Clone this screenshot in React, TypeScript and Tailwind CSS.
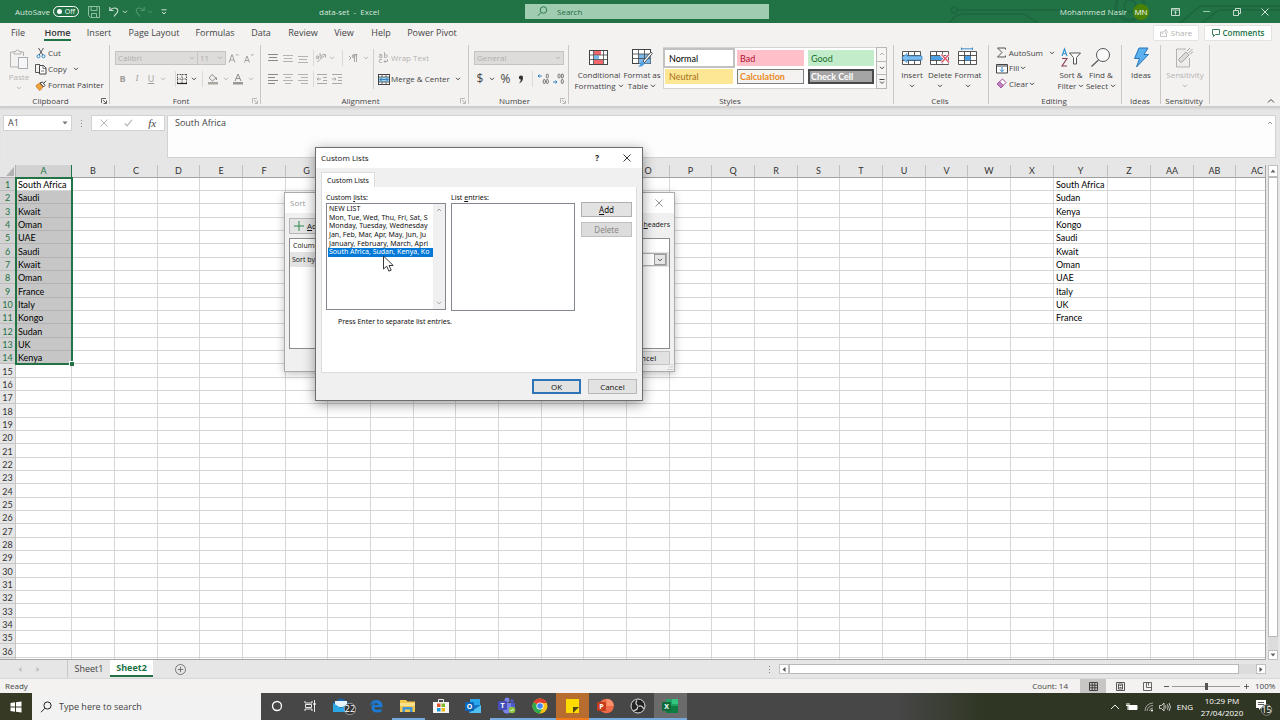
import type { ReactNode } from "react";

const INK = "#444444";
const DIM = "#b4b2b0";

function Svg({ w, h, children, className = "" }: { w: number; h: number; children: ReactNode; className?: string }) {
  return (
    <svg width={w} height={h} viewBox={`0 0 ${w} ${h}`} fill="none" className={`shrink-0 ${className}`} aria-hidden="true">
      {children}
    </svg>
  );
}

function Chevron({ color = INK }: { color?: string }) {
  return (
    <Svg w={6} h={4}>
      <path d="M1 .8 3 2.8 5 .8" stroke={color} strokeWidth="1" />
    </Svg>
  );
}

function Slot({ className, children, label }: { className: string; children: ReactNode; label: string }) {
  return (
    <button aria-label={label} className={`flex h-4 shrink-0 items-center justify-center ${className}`}>
      {children}
    </button>
  );
}

function Divider() {
  return <span className="h-4 w-px shrink-0 bg-[#dcdad8]" />;
}

function Launcher({ dim = false }: { dim?: boolean }) {
  const c = dim ? "#b4b2b0" : "#555555";
  return (
    <Svg w={6} h={6}>
      <path d="M.5 5V.5H5M2 2l3 3M5.5 2.5v3h-3" stroke={c} strokeWidth=".9" />
    </Svg>
  );
}

function Group({ title, width, launcher, children }: { title: string; width: string; launcher?: "on" | "dim"; children: ReactNode }) {
  return (
    <section aria-label={title} className={`flex h-[59px] shrink-0 flex-col border-r border-[#c9c7c5] ${width}`}>
      <div className="flex h-[51px] shrink-0 items-start">{children}</div>
      <div className="flex h-[10px] shrink-0 items-center pr-[2px] text-[8px] leading-[10px] text-[#444]">
        <span className="flex-1 text-center">{title}</span>
        {launcher && <Launcher dim={launcher === "dim"} />}
      </div>
    </section>
  );
}

function BigButton({ width, icon, lines, chevron, dim }: { width: string; icon: ReactNode; lines: string[]; chevron?: boolean; dim?: boolean }) {
  const last = lines.length - 1;
  return (
    <button className={`flex shrink-0 flex-col items-center whitespace-nowrap text-[8px] leading-[11px] ${width} ${dim ? "text-[#b4b2b0]" : "text-[#444]"}`}>
      <span className="flex h-[24px] items-center justify-center">{icon}</span>
      {lines.map((l, i) => (
        <span key={l} className="flex items-center gap-[2px]">
          {l}
          {chevron && lines.length > 1 && i === last && <Chevron />}
        </span>
      ))}
      {chevron && lines.length === 1 && (
        <span className="flex h-[11px] items-center">
          <Chevron color={dim ? DIM : INK} />
        </span>
      )}
    </button>
  );
}

/* ---------- ribbon icons ---------- */

const PasteIcon = () => (
  <Svg w={20} h={21}>
    <path d="M5 3H1.5v15H9M11 3h3.5v4" stroke={DIM} />
    <path d="M5 5V2.5h2a1.5 1.5 0 0 1 3 0h2V5z" stroke={DIM} fill="#f3f2f1" />
    <rect x="9.5" y="8.5" width="9" height="11" stroke="#a9aeb5" fill="#f6f6f8" />
  </Svg>
);
const CutIcon = () => (
  <Svg w={10} h={12}>
    <path d="M2.5 1 6.8 8M7.5 1 3.2 8" stroke="#555" />
    <circle cx="2.5" cy="9.3" r="1.5" stroke="#2b88c8" />
    <circle cx="7.5" cy="9.3" r="1.5" stroke="#2b88c8" />
  </Svg>
);
const CopyIcon = () => (
  <Svg w={12} h={12}>
    <path d="M4 9.5H.5v-8H5" stroke="#555" />
    <path d="M4.5 2.5h4L11 5v6H4.5z" stroke="#444" fill="#fff" />
    <path d="M8 2.5V5.5h3M6 8h3" stroke="#555" strokeWidth=".8" />
  </Svg>
);
const PainterIcon = () => (
  <Svg w={12} h={11}>
    <path d="M1 5.5 5 3l3 4-3 3.5C3.5 9.5 1.8 8 1 5.5z" fill="#f2a33c" stroke="#c7761a" strokeWidth=".8" />
    <path d="M5 2.8 8.5 7 10 5.5 7.5 2zM8.5 3.5 11 .8" stroke="#444" fill="#fff" />
  </Svg>
);
function Lines({ rows, color = "#8c8a88" }: { rows: [number, number, number][]; color?: string }) {
  return (
    <Svg w={10} h={10}>
      {rows.map(([x, y, w], i) => (
        <path key={i} d={`M${x} ${y + 0.5}h${w}`} stroke={color} />
      ))}
    </Svg>
  );
}
const BordersIcon = () => (
  <Svg w={12} h={12}>
    <path d="M1 1.5h10M1.5 1v10M10.5 1v10M6 1v10M1 6h10" stroke="#555" strokeDasharray="1.5 1" />
    <path d="M1 10.5h10" stroke="#222" strokeWidth="1.2" />
  </Svg>
);
const FillIcon = () => (
  <Svg w={12} h={12}>
    <path d="M5 1.5 9 5 5.5 8 2 5z" stroke="#8f8f8f" />
    <path d="M9.5 4.5v2.5" stroke="#8f8f8f" />
    <rect x="1" y="9" width="10" height="2.5" fill="#a7a99c" />
  </Svg>
);
const FontColorIcon = () => (
  <Svg w={12} h={12}>
    <path d="M3 8 6 1l3 7M4 5.5h4" stroke="#8f8f8f" />
    <rect x="1" y="9" width="10" height="2.5" fill="#9a9896" />
  </Svg>
);
const OrientIcon = () => (
  <Svg w={12} h={12}>
    <path d="M2 10 10.5 3M7.500 2.500H10.500V5.500M1 4.500q1.500-1.500 2.500 0v2q-2.500.5-2.500-.7t2.500-1M5 1v4.500q2 0 2-1.500T5 3" stroke="#aaa8a6" strokeWidth=".9" />
  </Svg>
);
const ParagraphIcon = () => (
  <Svg w={12} h={10}>
    <path d="M2 3l2 2-2 2" stroke="#aaa8a6" />
    <path d="M7.5 9V1.5M9.5 9V1.5M10.5 1.5H7a1.7 1.7 0 0 0 0 3.5" stroke="#aaa8a6" fill="#c4c2c0" />
  </Svg>
);
const IndentIcon = ({ flip }: { flip?: boolean }) => (
  <Svg w={12} h={10}>
    <path d="M1 .5h10M7 3.5h4M7 6.5h4M1 9.5h10" stroke="#aaa8a6" />
    <path d={flip ? "M1 5h4M3.5 3.5 5 5 3.5 6.5" : "M5 5H1M2.5 3.5 1 5l1.5 1.5"} stroke="#aaa8a6" />
  </Svg>
);
const WrapIcon = () => (
  <Svg w={11} h={12}>
    <path d="M1 2.5q3-1 3 1V5.5q-3 1-3-.8T4 4M6.5 0v5.5q3 .3 3-1.5T6.5 3M4 7.5q-3-.5-3 1.5t3 1.5M6 9.5h3.5V7M7.5 8 6 9.5 7.5 11" stroke="#aaa8a6" strokeWidth=".9" />
  </Svg>
);
const MergeIcon = () => (
  <Svg w={12} h={11}>
    <rect x=".5" y=".5" width="11" height="10" stroke="#444" fill="#fff" />
    <rect x="1" y="3" width="10" height="5" fill="#9bd0f0" />
    <path d="M.5 3h11M.5 8h11M4 .5V3M8 .5V3M4 8v2.5M8 8v2.5" stroke="#444" strokeWidth=".8" />
    <path d="M2 5.5h8M3.5 4 2 5.5 3.5 7M8.5 4 10 5.5 8.5 7" stroke="#1f6fb0" strokeWidth=".8" />
  </Svg>
);
const DecimalIcon = ({ less }: { less?: boolean }) => (
  <Svg w={12} h={12}>
    <path d={less ? "M1 9h4M3.5 7.5 5 9 3.5 10.5" : "M5 3H1M2.5 1.5 1 3l1.5 1.5"} stroke="#2b7fc0" />
    <rect x={less ? 6 : 9.3} y="1" width="2" height="4" rx="1" stroke="#666" strokeWidth=".8" />
    <rect x={less ? 9.3 : 6.3} y={less ? 1 : 6.5} width="2" height="4" rx="1" stroke="#555" strokeWidth=".8" />
    <rect x="9.3" y="6.500" width="2" height="4" rx="1" stroke="#555" strokeWidth=".8" />
  </Svg>
);
const CondIcon = () => (
  <Svg w={20} h={17}>
    <rect x=".5" y="1.5" width="18" height="14" fill="#fff" stroke="#444" />
    <rect x="5" y="2" width="7" height="4" fill="#f0686c" />
    <rect x="5" y="6.5" width="5" height="4" fill="#7db8ea" />
    <rect x="5" y="11" width="9" height="4" fill="#f0686c" />
    <path d="M.5 6h18M.5 10.5h18M4.5 1.5v14M14.5 1.5v14" stroke="#444" strokeWidth=".8" />
  </Svg>
);
const FormatTableIcon = () => (
  <Svg w={21} h={19}>
    <rect x=".5" y="1.5" width="18" height="14" fill="#fff" stroke="#444" />
    <path d="M7 6h11.5v9.5H7z" fill="#7db8ea" />
    <path d="M.5 6h18M.5 10.5h18M6.5 1.5v14M12.5 1.5v14" stroke="#444" strokeWidth=".8" />
    <path d="M11 13 19 4l1.3 1.5-7.800 9z" fill="#fff" stroke="#444" strokeWidth=".9" />
    <path d="M6 18.5c2 0 2-4 4.5-5l2 2C12 18 9 19 6 18.5z" fill="#4ba0e4" />
  </Svg>
);
const CellBase = ({ children }: { children: ReactNode }) => (
  <Svg w={22} h={21}>
    <path d="M1.5 4.500h18v13h-18zM1.5 8.500h18M1.5 13.500h18M7.500 4.500v13M13.500 4.500v13" stroke="#444" strokeWidth=".9" fill="#fff" />
    {children}
  </Svg>
);
const InsertIcon = () => (
  <CellBase>
    <path d="M.8 11 6 6.500V9h15v4H6v2.500z" fill="#7cbcf0" stroke="#3a86c8" strokeWidth=".7" />
  </CellBase>
);
const DeleteIcon = () => (
  <CellBase>
    <path d="M2 9h11v4H2z" fill="#4d9fe3" />
    <path d="M12 7.500 20 16M20 7.500 12 16" stroke="#f3f2f1" strokeWidth="3" />
    <path d="M12.500 7.500 20 15.500M20 7.500 12.500 15.500" stroke="#e0566a" strokeWidth="1.300" />
  </CellBase>
);
const FormatIcon = () => (
  <CellBase>
    <path d="M8 9h5.500v4.500H8z" fill="#4d9fe3" />
    <path d="M4.500 1.800h11M4.500.5v2.600M15.500.5v2.600" stroke="#3a8fd0" />
  </CellBase>
);
const SigmaIcon = () => (
  <Svg w={11} h={11}>
    <path d="M9.5 2.5V1H1.5L6 5.5 1.5 10h8V8.5" stroke="#555" />
  </Svg>
);
const FillDownIcon = () => (
  <Svg w={12} h={11}>
    <path d="M.5 1.5h11v8.5H.5zM.5 3h11" stroke="#444" fill="#fff" />
    <path d="M6 4v4.5M4 6.7l2 2 2-2" stroke="#2b88d0" />
  </Svg>
);
const ClearIcon = () => (
  <Svg w={11} h={11}>
    <path d="M6.5 1 10 4.5 5 9.8 1.2 6z" stroke="#a04c9c" fill="#fff" />
    <path d="M3.5 3.8 7.2 7.3 5 9.8 1.2 6z" fill="#c58bc4" stroke="#a04c9c" />
  </Svg>
);
const SortFilterIcon = () => (
  <Svg w={22} h={21}>
    <path d="M2 9 4.5 2 7 9M2.8 6.8h3.5" stroke="#2b8fd0" strokeWidth="1.1" />
    <path d="M2 11.5h5L2 19h5" stroke="#8a3f50" strokeWidth="1.1" />
    <path d="M9.5 6h11l-4 4.5V17h-3v-6.5z" stroke="#555" fill="#fff" />
  </Svg>
);
const FindIcon = () => (
  <Svg w={22} h={21}>
    <circle cx="13" cy="8" r="6.5" stroke="#555" fill="#fafafa" />
    <path d="M8.5 13 1.5 19.5" stroke="#555" strokeWidth="1.2" />
  </Svg>
);
const IdeasIcon = () => (
  <Svg w={17} h={21}>
    <path d="M6 1h9l-4 6.5h4.5L3.5 20l3-8.5H1.5z" fill="#5cb0f0" stroke="#2474b8" />
  </Svg>
);
const SensitivityIcon = () => (
  <Svg w={20} h={22}>
    <path d="M11 3H1.5v18h13v-9" stroke={DIM} fill="#eeedec" />
    <path d="M4 13 11 6l3 3-7 7c-1.5 1-4-1.5-3-3zM12 5l3-3M13.5 7l4-4M15 8.5l3-3" stroke="#a5a3a1" fill="#dddbd9" />
  </Svg>
);

/* ---------- title bar ---------- */

function TitleBar() {
  return (
    <header className="relative flex h-[23px] shrink-0 items-center bg-[#217346] text-[9px] text-[#d7e8dd]">
      <svg className="absolute top-0 right-0" width="340" height="23" viewBox="0 0 340 23" fill="none" aria-hidden="true">
        <path d="M18 10h110M10 23q4-9 14-9h60l14 9M240 23l20-17h80M262 23l17-13h61" stroke="#1d6840" strokeWidth="2" />
        <circle cx="14" cy="10" r="3" stroke="#1d6840" strokeWidth="2" />
        <circle cx="190" cy="6" r="14" stroke="#1d6840" strokeWidth="3" />
        <circle cx="190" cy="6" r="6" stroke="#1d6840" strokeWidth="2" />
      </svg>
      <div className="relative flex w-[319px] shrink-0 items-center pl-[15px]">
        <span className="w-[38px] text-[8px]">AutoSave</span>
        <button className="flex h-[11px] w-[26px] items-center justify-between rounded-full border border-white px-[3px] text-[7px] leading-none text-white">
          <span className="size-[5px] rounded-full bg-white" />
          Off
        </button>
        <button aria-label="Save" className="ml-[9px]">
          <Svg w={12} h={12}>
            <path d="M.5.5h11v11h-9L.5 9.5zM3 .5v4h6v-4M3.5 11.5V7.5h5v4" stroke="#8fc0a2" />
          </Svg>
        </button>
        <button aria-label="Undo" className="ml-[9px]">
          <Svg w={10} h={11}>
            <path d="M.8 1v3.5h3.7M1 4.3C3 1.5 8.5 1 8.8 4.5 9 7 6.5 8 5 10.5" stroke="#cfe3d6" strokeWidth="1.1" />
          </Svg>
        </button>
        <span className="ml-[3px]"><Chevron color="#cfe3d6" /></span>
        <button aria-label="Redo" className="ml-[7px]">
          <Svg w={10} h={11}>
            <path d="M9.2 1v3.5H5.5M9 4.3C7 1.5 1.5 1 1.2 4.5 1 7 3.5 8 5 10.5" stroke="#4f966d" strokeWidth="1.1" />
          </Svg>
        </button>
        <span className="ml-[2px]"><Chevron color="#4f966d" /></span>
        <button aria-label="Customize toolbar" className="ml-[8px]">
          <Svg w={6} h={6}>
            <path d="M.5.8h5M1 3l2 2 2-2" stroke="#cfe3d6" />
          </Svg>
        </button>
      </div>
      <h1 className="w-[206px] shrink-0 text-[8px]">data-set&nbsp; -&nbsp; Excel</h1>
      <label className="flex h-[15px] w-[244px] shrink-0 items-center bg-[#a0cdb1] pl-[12px]">
        <Svg w={11} h={11}>
          <circle cx="6.5" cy="4" r="3.3" stroke="#2c7a4f" />
          <path d="M4 6.5.8 9.8" stroke="#2c7a4f" />
        </Svg>
        <input aria-label="Search" placeholder="Search" className="ml-[9px] w-[180px] bg-transparent text-[8px] outline-none placeholder:text-[#256b43] placeholder:opacity-100" />
      </label>
      <div className="relative ml-auto flex items-center">
        <span className="text-[8px]">Mohammed Nasir</span>
        <span className="mr-[3px] ml-[6px] flex size-4 items-center justify-center rounded-full bg-[#498205] text-[8px] text-white">MN</span>
        <button aria-label="Ribbon display" className="flex w-[46px] justify-center">
          <Svg w={9} h={8}>
            <path d="M.5.5h8v7h-8zM.5 2h8M4.5 6.5v-3M3.3 4.6 4.5 3.4l1.2 1.2" stroke="#d7e8dd" strokeWidth=".9" />
          </Svg>
        </button>
        <button aria-label="Minimize" className="flex w-[16px] justify-center"><span className="h-px w-[7px] bg-[#9cc5ac]" /></button>
        <button aria-label="Restore" className="flex w-[46px] justify-center">
          <Svg w={8} h={8}>
            <path d="M.5 2.5h5v5h-5zM2.5 2.5v-2h5v5h-2" stroke="#d7e8dd" strokeWidth=".9" />
          </Svg>
        </button>
        <button aria-label="Close" className="mr-[11px] flex w-[9px] justify-center">
          <Svg w={8} h={8}><path d="M.5.5l7 7M7.5.5l-7 7" stroke="#e3f0e8" strokeWidth=".9" /></Svg>
        </button>
      </div>
    </header>
  );
}

const TABS: [string, string][] = [
  ["File", "w-[36px]"], ["Home", "w-[43px]"], ["Insert", "w-[40px]"], ["Page Layout", "w-[70px]"], ["Formulas", "w-[52px]"],
  ["Data", "w-[40px]"], ["Review", "w-[44px]"], ["View", "w-[38px]"], ["Help", "w-[36px]"], ["Power Pivot", "w-[66px]"],
];

function TabRow() {
  return (
    <nav className="flex h-[21px] shrink-0 items-start bg-[#f3f2f1] text-[9px] text-[#444]">
      {TABS.map(([t, w]) => (
        <button key={t} className={`flex h-[18px] shrink-0 items-end justify-center whitespace-nowrap ${w}`}>
          <span className={t === "Home" ? "h-[15px] border-b-2 border-[#217346] font-semibold leading-[14px] text-[#333]" : "h-[15px] leading-[14px]"}>{t}</span>
        </button>
      ))}
      <div className="mt-[3px] mr-[9px] ml-auto flex gap-[7px] text-[8px]">
        <button className="flex h-[14px] w-[44px] items-center justify-center gap-[3px] bg-white text-[#b4b2b0] shadow-[0_0_1px_#999]">
          <Svg w={8} h={8}><path d="M2.5 3H.5v4.5h6V5M2.5 5c0-2 1-3 3-3V.5L7.5 3 5.5 5V3.5" stroke={DIM} strokeWidth=".8" /></Svg>
          Share
        </button>
        <button className="flex h-[14px] w-[66px] items-center justify-center gap-[3px] bg-white font-semibold text-[#217346] shadow-[0_0_1px_#999]">
          <Svg w={8} h={8}><path d="M.5.5h7v5h-4l-2 2v-2h-1z" stroke="#217346" strokeWidth=".9" /></Svg>
          Comments
        </button>
      </div>
    </nav>
  );
}

const STYLES: [string, string][] = [
  ["Normal", "bg-white px-[4px] text-black outline-2 outline-[#c3c1bf]"],
  ["Bad", "bg-[#ffc0c9] px-[3px] text-[#b01030]"],
  ["Good", "bg-[#c3ecca] px-[3px] text-[#12702a]"],
  ["Neutral", "bg-[#fde795] px-[4px] text-[#a5701a]"],
  ["Calculation", "border border-[#7f7f7f] bg-[#f4f3f2] px-[2px] font-bold text-[#ea8a22]"],
  ["Check Cell", "border-2 border-[#4a4a4a] bg-[#a5a5a5] px-px font-bold text-white"],
];

function Ribbon() {
  return (
    <div className="flex h-[63px] shrink-0 border-b border-[#cfcdcb] bg-[#f3f2f1] pt-px text-[8px] text-[#444]">
      <Group title="Clipboard" width="w-[110px]" launcher="on">
        <BigButton width="w-[30px] ml-[4px] mt-[2px]" icon={<PasteIcon />} lines={["Paste"]} chevron dim />
        <div className="flex flex-col">
          <button className="flex h-4 items-center gap-px"><span className="flex w-[13px] justify-center"><CutIcon /></span>Cut</button>
          <button className="flex h-4 items-center gap-px"><span className="flex w-[13px] justify-center"><CopyIcon /></span>Copy<span className="ml-[5px]"><Chevron /></span></button>
          <button className="flex h-4 items-center gap-px whitespace-nowrap"><span className="flex w-[13px] justify-center"><PainterIcon /></span>Format Painter</button>
        </div>
      </Group>

      <Group title="Font" width="w-[151px]" launcher="dim">
        <div className="flex flex-col pl-[5px] pt-[6px]">
          <div className="flex h-[14px] items-center">
            <span className="relative flex h-[14px] w-[83px] items-center border border-[#c6c4c2] bg-[#dddcdb]">
              <select disabled aria-label="Font name" className="w-full appearance-none bg-transparent pl-[2px] text-[8px] text-[#b0aeac] opacity-100"><option>Calibri</option></select>
              <span className="absolute right-[2px] flex"><Chevron color={DIM} /></span>
            </span>
            <span className="relative flex h-[14px] w-[28px] items-center border border-l-0 border-[#c6c4c2] bg-[#dddcdb]">
              <select disabled aria-label="Font size" className="w-full appearance-none bg-transparent pl-[2px] text-[8px] text-[#b0aeac] opacity-100"><option>11</option></select>
              <span className="absolute right-[2px] flex"><Chevron color={DIM} /></span>
            </span>
            <Slot label="Grow font" className="w-[15px]"><Svg w={11} h={10}><path d="M1 9.5 4 1.5l3 8M2 7h4M8 2.5l1.2-1.3L10.4 2.5" stroke="#9a9896" strokeWidth=".9" /></Svg></Slot>
            <Slot label="Shrink font" className="w-[15px]"><Svg w={11} h={10}><path d="M1.5 9.5 4 3l2.5 6.5M2.3 7.5h3.5M8 1.2l1.2 1.3 1.2-1.3" stroke="#9a9896" strokeWidth=".9" /></Svg></Slot>
          </div>
          <div className="mt-[6px] flex h-4 items-center text-[9px] text-[#a09e9c]">
            <Slot label="Bold" className="w-[15px] font-bold">B</Slot>
            <Slot label="Italic" className="w-[14px] font-serif italic">I</Slot>
            <Slot label="Underline" className="w-[14px] underline">U</Slot>
            <Slot label="Underline style" className="w-[10px]"><Chevron color={DIM} /></Slot>
            <span className="w-[7px]" /><Divider />
            <Slot label="Borders" className="w-[12px]"><BordersIcon /></Slot>
            <Slot label="Border style" className="w-[12px]"><Chevron /></Slot>
            <span className="w-[2px]" /><Divider /><span className="w-[3px]" />
            <Slot label="Fill color" className="w-[14px]"><FillIcon /></Slot>
            <Slot label="Fill options" className="w-[11px]"><Chevron color={DIM} /></Slot>
            <Slot label="Font color" className="w-[14px]"><FontColorIcon /></Slot>
            <Slot label="Font color options" className="w-[11px]"><Chevron color={DIM} /></Slot>
          </div>
        </div>
      </Group>

      <Group title="Alignment" width="w-[208px]" launcher="dim">
        <div className="flex flex-col gap-[5px] pl-[4px] pt-[5px]">
          <div className="flex h-4 items-center">
            <Slot label="Top align" className="w-[15px]"><Lines rows={[[0, 1, 10], [1, 4, 8], [0, 7, 10]]} /></Slot>
            <Slot label="Middle align" className="w-[15px]"><Lines rows={[[0, 2, 10], [1, 5, 8], [0, 8, 10]]} color={DIM} /></Slot>
            <Slot label="Bottom align" className="w-[15px]"><Lines rows={[[0, 3, 10], [1, 6, 8], [0, 9, 10]]} color={DIM} /></Slot>
            <span className="w-[3px]" /><Divider />
            <Slot label="Orientation" className="w-[14px]"><OrientIcon /></Slot>
            <Slot label="Orientation options" className="w-[8px]"><Chevron color={DIM} /></Slot>
            <span className="w-[6px]" /><Divider /><span className="w-[3px]" />
            <Slot label="Text direction" className="w-[14px]"><ParagraphIcon /></Slot>
            <Slot label="Direction options" className="w-[12px]"><Chevron color={DIM} /></Slot>
          </div>
          <div className="flex h-4 items-center">
            <Slot label="Align left" className="w-[15px]"><Lines rows={[[0, 0, 10], [0, 3, 7], [0, 6, 10], [0, 9, 7]]} /></Slot>
            <Slot label="Center" className="w-[15px]"><Lines rows={[[0, 0, 10], [2, 3, 6], [0, 6, 10], [2, 9, 6]]} color={DIM} /></Slot>
            <Slot label="Align right" className="w-[15px]"><Lines rows={[[0, 0, 10], [3, 3, 7], [0, 6, 10], [3, 9, 7]]} color={DIM} /></Slot>
            <span className="w-[3px]" /><Divider />
            <Slot label="Decrease indent" className="w-[15px]"><IndentIcon /></Slot>
            <Slot label="Increase indent" className="w-[15px]"><IndentIcon flip /></Slot>
          </div>
        </div>
        <span className="mt-[4px] ml-px h-[40px] w-px shrink-0 bg-[#d0cecc]" />
        <div className="flex flex-col gap-[5px] pl-[4px] pt-[5px]">
          <button className="flex h-4 items-center gap-px whitespace-nowrap text-[#b4b2b0]"><span className="flex w-[12px]"><WrapIcon /></span>Wrap Text</button>
          <button className="flex h-4 items-center gap-px whitespace-nowrap"><MergeIcon />Merge &amp; Center<span className="ml-[4px]"><Chevron /></span></button>
        </div>
      </Group>

      <Group title="Number" width="w-[100px]" launcher="dim">
        <div className="flex flex-col pl-[5px] pt-[6px]">
          <span className="relative flex h-[14px] w-[90px] items-center border border-[#c6c4c2] bg-[#dddcdb]">
            <select disabled aria-label="Number format" className="w-full appearance-none bg-transparent pl-[2px] text-[8px] text-[#b0aeac] opacity-100"><option>General</option></select>
            <span className="absolute right-[2px] flex"><Chevron color={DIM} /></span>
          </span>
          <div className="mt-[6px] flex h-4 items-center">
            <Slot label="Currency" className="w-[12px] text-[12px]">$</Slot>
            <Slot label="Currency options" className="w-[12px]"><Chevron /></Slot>
            <Slot label="Percent" className="w-[15px] text-[12px]">%</Slot>
            <Slot label="Comma" className="w-[15px]"><Svg w={6} h={9}><path d="M3 .5a2 2 0 0 1 2 2.2C5 5.5 3.5 7.5 1 8.5 2.3 7 2.8 5.8 2.8 4.6A2 2 0 0 1 3 .5z" fill="#333" /></Svg></Slot>
            <span className="w-[4px]" /><Divider /><span className="w-[2px]" />
            <Slot label="Increase decimal" className="w-[15px]"><DecimalIcon /></Slot>
            <Slot label="Decrease decimal" className="w-[15px]"><DecimalIcon less /></Slot>
          </div>
        </div>
      </Group>

      <Group title="Styles" width="w-[325px]">
        <BigButton width="w-[46px] ml-[7px]" icon={<CondIcon />} lines={["Conditional", "Formatting"]} chevron />
        <BigButton width="w-[40px]" icon={<FormatTableIcon />} lines={["Format as", "Table"]} chevron />
        <div className="mt-[2px] ml-px flex h-[42px] border border-[#d6d4d2] bg-white">
          <div className="grid grid-cols-[68px_67px_66px] grid-rows-[16px_15px] gap-x-[4px] gap-y-[3px] py-[2px] pr-[2px] pl-px font-['Lato','Liberation_Sans',sans-serif]">
            {STYLES.map(([n, c]) => (
              <button key={n} className={`flex items-center text-[9px] leading-[11px] ${c}`}>{n}</button>
            ))}
          </div>
          <div className="-my-px -mr-px flex w-[11px] flex-col border border-[#bab8b6] bg-[#f6f5f4]">
            <button aria-label="Previous styles" className="flex flex-1 items-center justify-center"><Svg w={6} h={4}><path d="M1 3 3 1l2 2" stroke={DIM} /></Svg></button>
            <button aria-label="Next styles" className="flex flex-1 items-center justify-center border-y border-[#bab8b6]"><Chevron /></button>
            <button aria-label="More styles" className="flex flex-1 items-center justify-center"><Svg w={6} h={6}><path d="M.5.5h5M1 2.5l2 2 2-2" stroke={INK} /></Svg></button>
          </div>
        </div>
      </Group>

      <Group title="Cells" width="w-[95px]">
        <BigButton width="w-[28px] ml-[4px]" icon={<InsertIcon />} lines={["Insert"]} chevron />
        <BigButton width="w-[28px]" icon={<DeleteIcon />} lines={["Delete"]} chevron />
        <BigButton width="w-[28px]" icon={<FormatIcon />} lines={["Format"]} chevron />
      </Group>

      <Group title="Editing" width="w-[133px]">
        <div className="flex w-[66px] flex-col pl-[7px]">
          <button className="flex h-[15px] items-center gap-px"><span className="w-[12px]"><SigmaIcon /></span>AutoSum<span className="ml-[5px]"><Chevron /></span></button>
          <button className="flex h-4 items-center gap-px"><span className="w-[12px]"><FillDownIcon /></span>Fill<Chevron /></button>
          <button className="flex h-[15px] items-center gap-px"><span className="w-[12px]"><ClearIcon /></span>Clear<Chevron /></button>
        </div>
        <BigButton width="w-[32px]" icon={<SortFilterIcon />} lines={["Sort &", "Filter"]} chevron />
        <BigButton width="w-[28px]" icon={<FindIcon />} lines={["Find &", "Select"]} chevron />
      </Group>

      <Group title="Ideas" width="w-[39px]">
        <BigButton width="w-full" icon={<IdeasIcon />} lines={["Ideas"]} />
      </Group>
      <Group title="Sensitivity" width="w-[49px]">
        <BigButton width="w-full" icon={<SensitivityIcon />} lines={["Sensitivity"]} chevron dim />
      </Group>
      <button aria-label="Collapse ribbon" className="mr-[5px] mb-[2px] ml-auto self-end">
        <Svg w={8} h={6}><path d="M1 4.5l3-3 3 3" stroke={INK} /></Svg>
      </button>
    </div>
  );
}

function FormulaBar() {
  return (
    <div className="flex h-[58px] shrink-0 bg-[#e6e6e6] pt-[8px] pr-[4px] text-[9px] text-[#444] shadow-[inset_0_3px_3px_-2px_#c4c4c4]">
      <div className="ml-[3px] flex h-4 w-[69px] shrink-0 items-center border border-[#d2d2d2] bg-white pr-[3px] pl-[4px]">
        <input aria-label="Name box" defaultValue="A1" className="w-0 flex-1 bg-transparent outline-none" />
        <Svg w={6} h={4}><path d="M.5.5h5L3 3.5z" fill="#777" /></Svg>
      </div>
      <div className="mx-[8px] flex h-4 w-[3px] flex-col items-center justify-center gap-[2px]">
        <span className="size-px bg-[#888]" /><span className="size-px bg-[#888]" /><span className="size-px bg-[#888]" />
      </div>
      <div className="flex h-4 w-[74px] shrink-0 items-center justify-around border border-[#d2d2d2] bg-white">
        <button aria-label="Cancel entry"><Svg w={8} h={8}><path d="M.5.5l7 7M7.5.5l-7 7" stroke="#b5b5b5" /></Svg></button>
        <button aria-label="Enter"><Svg w={9} h={8}><path d="M.8 4.5 3 6.8 8 .8" stroke="#b5b5b5" strokeWidth="1.2" /></Svg></button>
        <button aria-label="Insert function" className="font-['Liberation_Serif',serif] text-[11px] leading-none italic">fx</button>
      </div>
      <div className="ml-[2px] flex h-[43px] min-w-0 flex-1 items-start justify-between border border-[#d2d2d2] bg-[#fdfdfd] pr-[2px]">
        <input aria-label="Formula" defaultValue="South Africa" className="h-[13px] w-[400px] bg-transparent pl-[7px] outline-none" />
        <Svg w={6} h={12}><path d="M1 8l2-2 2 2" stroke="#999" /></Svg>
      </div>
    </div>
  );
}

/* ---------- sheet ---------- */

const COLS = "A B C D E F G H I J K L M N O P Q R S T U V W X Y Z AA AB AC".split(" ");
const LIST_A = ["South Africa", "Saudi", "Kwait", "Oman", "UAE", "Saudi", "Kwait", "Oman", "France", "Italy", "Kongo", "Sudan", "UK", "Kenya"];
const LIST_Y = ["South Africa", "Sudan", "Kenya", "Kongo", "Saudi", "Kwait", "Oman", "UAE", "Italy", "UK", "France"];

function colWidth(i: number) {
  if (i === 0) return "w-[56px]";
  if (COLS[i] === "Y") return "w-[54px]";
  return i % 3 === 0 ? "w-[42px]" : "w-[43px]";
}

function Sheet() {
  return (
    <div className="flex min-h-0 flex-1 bg-[#e6e6e6]">
      <div className="relative min-w-0 flex-1 overflow-hidden border-r border-b border-[#a5a5a5] bg-white font-['Lato','Liberation_Sans',sans-serif]">
        <table className="w-0 table-fixed border-separate border-spacing-0 text-[9px] leading-[10px] text-black">
          <colgroup>
            <col className="w-[16px]" />
            {COLS.map((c, i) => <col key={c} className={colWidth(i)} />)}
          </colgroup>
          <thead>
            <tr className="h-[13px] bg-[#e6e6e6] text-[#333]">
              <th aria-label="Select all" className="border-r border-b border-[#b0b0b0] p-0">
                <Svg w={10} h={9} className="ml-auto"><path d="M9 0v9H1z" fill="#b2b2b2" /></Svg>
              </th>
              {COLS.map((c, i) => (
                <th key={c} scope="col" className={i === 0 ? "border-r border-b border-[#217346] bg-[#d2d2d2] p-0 font-normal text-[#217346]" : "border-r border-b border-r-[#c0c0c0] border-b-[#a0a0a0] p-0 font-normal"}>{c}</th>
              ))}
            </tr>
          </thead>
          <tbody>
            {Array.from({ length: 37 }, (_, r) => (
              <tr key={r} className={r % 3 === 2 ? "h-[14px]" : "h-[13px]"}>
                <th scope="row" className={r < 14 ? "border-r border-b border-[#bcbcbc] bg-[#d2d2d2] p-0 pt-[2px] text-center font-normal text-[#217346]" : "border-r border-b border-[#c6c6c6] bg-[#e6e6e6] p-0 pt-[2px] text-center font-normal text-[#333]"}>{r < 36 ? r + 1 : ""}</th>
                {COLS.map((c, i) => {
                  const text = i === 0 ? LIST_A[r] : c === "Y" ? LIST_Y[r] : undefined;
                  const fill = i === 0 && r > 0 && r < 14 ? "border-[#b2b2b2] bg-[#c6c6c6]" : "border-[#d6d6d6]";
                  return <td key={c} className={`border-r border-b p-0 pt-[2px] pl-[2px] whitespace-nowrap ${fill}`}>{text}</td>;
                })}
              </tr>
            ))}
          </tbody>
        </table>
        <div className="pointer-events-none absolute top-[12px] left-[15px] h-[188px] w-[58px] border-2 border-[#217346]">
          <span className="absolute -right-[3px] -bottom-[3px] size-[5px] border-t border-l border-white bg-[#217346]" />
        </div>
      </div>
      <div className="flex w-[14px] shrink-0 flex-col items-center">
        <button aria-label="Scroll up" className="flex h-[12px] w-[10px] items-center justify-center border border-[#c0c0c0] bg-white"><Svg w={6} h={4}><path d="M.5 3.5h5L3 .5z" fill="#666" /></Svg></button>
        <div className="flex w-[10px] flex-1 flex-col bg-[#dcdcdc]">
          <div className="h-[460px] border border-[#b8b8b8] bg-white" />
        </div>
        <button aria-label="Scroll down" className="flex h-[10px] w-[10px] items-center justify-center border border-[#c0c0c0] bg-white"><Svg w={6} h={4}><path d="M.5.5h5L3 3.5z" fill="#666" /></Svg></button>
      </div>
    </div>
  );
}

function SheetTabs() {
  return (
    <div className="flex h-[19px] shrink-0 items-start border-b border-[#d8d8d8] bg-[#e6e6e6] text-[9px] text-[#444]">
      <div className="flex h-[18px] w-[68px] items-center gap-[14px] border-r border-[#c8c8c8] pl-[18px]">
        <button aria-label="Previous sheet"><Svg w={4} h={5}><path d="M3.5 0v5L.5 2.5z" fill="#bdbdbd" /></Svg></button>
        <button aria-label="Next sheet"><Svg w={4} h={5}><path d="M.5 0v5l3-2.5z" fill="#bdbdbd" /></Svg></button>
      </div>
      <button className="h-[17px] w-[42px]">Sheet1</button>
      <button className="h-[17px] w-[43px] border-b-2 border-[#217346] bg-white pt-px font-bold text-[#217346]">Sheet2</button>
      <button aria-label="New sheet" className="ml-[22px] flex h-[18px] items-center">
        <Svg w={11} h={11}><circle cx="5.5" cy="5.5" r="5" stroke="#777" /><path d="M5.5 2.8v5.4M2.8 5.5h5.4" stroke="#777" /></Svg>
      </button>
      <div className="ml-auto flex h-[18px] items-center pr-[14px]">
        <span className="mr-[9px] flex flex-col gap-[2px]"><span className="size-px bg-[#888]" /><span className="size-px bg-[#888]" /><span className="size-px bg-[#888]" /></span>
        <button aria-label="Scroll left" className="flex size-[10px] items-center justify-center border border-[#c0c0c0] bg-white"><Svg w={4} h={5}><path d="M3.5 0v5L.5 2.5z" fill="#555" /></Svg></button>
        <div className="flex h-[10px] w-[467px] bg-[#dcdcdc]"><div className="w-[450px] border border-[#b8b8b8] bg-white" /></div>
        <button aria-label="Scroll right" className="flex size-[10px] items-center justify-center border border-[#c0c0c0] bg-white"><Svg w={4} h={5}><path d="M.5 0v5l3-2.5z" fill="#555" /></Svg></button>
      </div>
    </div>
  );
}

function StatusBar() {
  return (
    <div className="flex h-[14px] shrink-0 items-center bg-[#f3f2f1] pr-[5px] pl-[5px] text-[8px] leading-[14px] text-[#444]">
      <span>Ready</span>
      <span className="mr-[12px] ml-auto">Count: 14</span>
      <button aria-label="Normal view" className="flex h-[14px] w-[26px] items-center justify-center bg-[#c8c6c4]"><Svg w={9} h={9}><path d="M.5.5h8v8h-8zM.5 3.2h8M.5 5.8h8M3.2.5v8M5.8.5v8" stroke="#333" strokeWidth=".9" /></Svg></button>
      <button aria-label="Page layout view" className="flex w-[28px] justify-center"><Svg w={9} h={9}><path d="M.5.5h8v8h-8zM2.5 2v5h4V2zM3.5 3.5h2M3.5 5.5h2" stroke="#444" strokeWidth=".9" /></Svg></button>
      <button aria-label="Page break view" className="flex w-[26px] justify-center"><Svg w={9} h={9}><path d="M.5.5h8v8h-8zM3.5.5v5h5M5.5.5v3" stroke="#555" strokeWidth=".9" /></Svg></button>
      <button aria-label="Zoom out" className="ml-[3px] flex w-[6px] justify-center"><span className="h-px w-[5px] bg-[#555]" /></button>
      <span className="mx-[3px] flex h-[10px] w-[68px] items-center">
        <input type="range" aria-label="Zoom" defaultValue={50} className="h-px w-full appearance-none bg-[#999] [&::-webkit-slider-thumb]:h-[7px] [&::-webkit-slider-thumb]:w-[3px] [&::-webkit-slider-thumb]:appearance-none [&::-webkit-slider-thumb]:bg-[#555]" />
      </span>
      <button aria-label="Zoom in" className="flex w-[6px] justify-center"><Svg w={5} h={5}><path d="M2.5 0v5M0 2.5h5" stroke="#555" strokeWidth=".9" /></Svg></button>
      <span className="ml-[6px] w-[20px] text-right">100%</span>
    </div>
  );
}

/* ---------- taskbar ---------- */

type TaskApp = { name: string; icon: ReactNode; tone?: string };
const RUN = "border-b-2 border-[#76a9dc]";

const tile = (letter: string, color: string) => (
  <>
    <rect x="0" y="4" width="9" height="9" rx="1" fill={color} />
    <text x="4.5" y="11" fontSize="7" fontWeight="bold" fill="#fff" textAnchor="middle">{letter}</text>
  </>
);

const APPS: TaskApp[] = [
  { name: "Cortana", icon: <Svg w={12} h={12}><circle cx="6" cy="6" r="4.500" stroke="#fff" strokeWidth="1.300" /></Svg> },
  { name: "Task view", icon: <Svg w={12} h={12}><path d="M1 1v2h7V1M1 11V9h7v2M1.5 4.5h6v3h-6zM10.5 0v3M10.5 5v7" stroke="#e8e8e8" /><rect x="9.5" y="3" width="2" height="2" fill="#fff" /></Svg> },
  { name: "Mail", icon: (
    <Svg w={26} h={18} className="ml-[4px]">
      <path d="M1 6 9 1l8 5v9H1z" fill="#1566b3" /><path d="M3 4h12v6H3z" fill="#e8f4fc" /><path d="M1 6l8 5 8-5v9H1z" fill="#2ba7e6" />
      <circle cx="18" cy="12" r="5.700" fill="#333" stroke="#aaa" strokeWidth=".8" />
      <text x="18" y="15" fontSize="9" fill="#fff" textAnchor="middle">22</text>
    </Svg>
  ) },
  { name: "Edge", icon: <Svg w={14} h={14}><path d="M1 7C1.5 3 4 1 7.5 1c4 0 6 3 6 6v1.3H5c.3 2.5 4 3.5 7.5 1.5v2.7C8 14.8 2.5 13.5 2.5 8.5 2.5 6 4 4.5 6 3.8 3.5 4 2 5.5 1 7zM5 6h4.5C9.4 3.5 5.5 3.5 5 6z" fill="#1a7ad4" /></Svg> },
  { name: "File Explorer", tone: RUN, icon: <Svg w={16} h={14}><path d="M0 1h6l1.5 1.5H15V13H0z" fill="#f5c84c" /><path d="M0 4h15v3H0z" fill="#fbe08c" /><path d="M2.5 13V8h10v5H10v-2.5H5V13z" fill="#3f95d8" /></Svg> },
  { name: "Store", icon: <Svg w={16} h={16}><path d="M5.5 4V1.5h5V4" stroke="#eee" /><path d="M0 4h16v11H0z" fill="#f5f5f5" /><path d="M4 5.5h3.5V9H4z" fill="#e5532d" /><path d="M8.5 5.5H12V9H8.5z" fill="#7db928" /><path d="M4 10h3.5v3.5H4z" fill="#1d9be2" /><path d="M8.5 10H12v3.5H8.5z" fill="#f8b70f" /></Svg> },
  { name: "Outlook", icon: <Svg w={17} h={16}><path d="M5 1h10v8H5z" fill="#28a8ea" /><path d="M4 7l12 0v8H4z" fill="#1276c8" /><path d="M4 15 16 7v8z" fill="#50c0f0" />{tile("O", "#0f64b8")}</Svg> },
  { name: "Teams", tone: RUN, icon: <Svg w={18} h={17}><circle cx="9" cy="3" r="2.5" fill="#7b83eb" /><circle cx="14" cy="4" r="1.8" fill="#5059c9" /><path d="M5 6h8v6a4 4 0 0 1-8 1z" fill="#7b83eb" /><path d="M13 6h4v5q-1 3-4 2z" fill="#5059c9" />{tile("T", "#464eb8")}<circle cx="14" cy="13" r="3.3" fill="#8cc63f" /><path d="M12.5 13l1 1 2-2" stroke="#fff" /></Svg> },
  { name: "Chrome", tone: RUN, icon: <Svg w={16} h={16}><circle cx="8" cy="8" r="7.5" fill="#fbc116" /><path d="M8 8 1.5 4.2A7.5 7.5 0 0 1 14.5 4.2L15 5H8z" fill="#e33b2e" /><path d="M8 8 1.5 4.2A7.5 7.5 0 0 0 7.5 15.5L11 9.5z" fill="#2da94f" /><circle cx="8" cy="8" r="3.6" fill="#fff" /><circle cx="8" cy="8" r="2.8" fill="#4285f4" /></Svg> },
  { name: "Sticky Notes", tone: "border-b-2 border-[#f07a1c] bg-[#b86d30]", icon: <Svg w={13} h={14}><path d="M0 0h13v14H0z" fill="#fddb00" /><path d="M7 14V8h6z" fill="#4d4417" /></Svg> },
  { name: "PowerPoint", tone: RUN, icon: <Svg w={17} h={16}><circle cx="9.5" cy="8" r="7.3" fill="#ed6c47" /><path d="M9.5.7A7.3 7.3 0 0 1 16.8 8H9.5z" fill="#ff8f6b" />{tile("P", "#c43e1c")}</Svg> },
  { name: "OBS Studio", tone: RUN, icon: <Svg w={16} h={16}><circle cx="8" cy="8" r="7" fill="#222" stroke="#ddd" /><path d="M8 7.5c-2-.5-3-3-1-5M8.5 8.5c2-1.5 4.5 0 5 2.5M7.5 8.5c.5 2-1 4-4 4" stroke="#ddd" strokeWidth="1.2" /></Svg> },
  { name: "Excel", tone: "border-b-2 border-[#76a9dc] bg-[#6b6b6b]", icon: <Svg w={17} h={16}><path d="M4 1h12v14H4z" fill="#21a366" /><path d="M10 1h6v5h-6z" fill="#33c481" /><path d="M4 8h12v7H4z" fill="#107c41" />{tile("X", "#0f6b38")}</Svg> },
];

function Taskbar() {
  return (
    <footer className="flex h-[27px] shrink-0 items-stretch bg-[linear-gradient(to_right,#474747_70%,#2f3623_77%)] text-white">
      <button aria-label="Start" className="flex w-[32px] items-center justify-center bg-[#363a25]">
        <Svg w={12} h={12}><path d="M.5 2 5 1.3v4.2H.5zM6 1.2 11.5.4v5.1H6zM.5 6.5H5v4.2L.5 10zM6 6.5h5.5v5.1L6 10.8z" fill="#fff" /></Svg>
      </button>
      <label className="flex w-[229px] items-center bg-[#f2f2f2] pl-[8px]">
        <Svg w={12} h={12}><circle cx="7.5" cy="4.5" r="3.6" stroke="#222" /><path d="M5 7.2 1 11.2" stroke="#222" /></Svg>
        <input aria-label="Search Windows" placeholder="Type here to search" className="mt-px ml-[7px] w-[150px] bg-transparent text-[9px] outline-none placeholder:text-[#444] placeholder:opacity-100" />
      </label>
      <div className="flex w-[426px]">
        {APPS.map((a) => (
          <button key={a.name} aria-label={a.name} className={`flex min-w-0 flex-1 items-center justify-center ${a.tone ?? "border-b-2 border-transparent"}`}>{a.icon}</button>
        ))}
      </div>
      <div className="ml-auto flex items-center gap-[6px] text-[8px]">
        <Svg w={10} h={6}><path d="M1 5l4-4 4 4" stroke="#eee" /></Svg>
        <Svg w={12} h={10}><path d="M3 3.5h8v4H3z" fill="#fff" stroke="#fff" /><path d="M1 1v3M3 1v3M0 3.5h4M2 4v4" stroke="#fff" /></Svg>
        <Svg w={9} h={10}><path d="M1 9a8 8 0 0 1 8-8M3 9a6 6 0 0 1 6-5.5M5.5 9A3.5 3.5 0 0 1 9 6" stroke="#bbb" strokeWidth=".8" /><circle cx="8" cy="8.5" r="1" fill="#fff" /></Svg>
        <Svg w={12} h={10}><path d="M.5 3.5H2.5L5 1v8L2.5 6.5H.5zM6.5 3.5q1 1.5 0 3M8.3 2.3q2 2.7 0 5.4M10 1q3 4 0 8" stroke="#eee" strokeWidth=".8" /></Svg>
        <span>ENG</span>
        <div className="w-[46px] text-center leading-[12px]"><div>10:29 PM</div><div>27/04/2020</div></div>
        <button aria-label="Notifications, 15 new" className="mr-[7px] ml-[4px]">
          <Svg w={18} h={18}>
            <path d="M1 2h10v8H6l-2 2v-2H1z" fill="#fff" /><path d="M3 4.5h6M3 6.5h6" stroke="#333" strokeWidth=".8" />
            <circle cx="11.5" cy="12" r="5.3" fill="#2f3623" stroke="#999" strokeWidth=".8" />
            <text x="11.5" y="15" fontSize="8.5" fill="#fff" textAnchor="middle">15</text>
          </Svg>
        </button>
      </div>
    </footer>
  );
}

/* ---------- dialogs ---------- */

function SortDialog() {
  return (
    <div role="dialog" aria-label="Sort" className="absolute top-[192px] left-[284px] flex h-[180px] w-[391px] flex-col border border-[#ababab] bg-[#f0f0f0] text-[8px] text-[#111] shadow-[0_2px_8px_rgba(0,0,0,0.25)]">
      <div className="flex h-[20px] items-center justify-between bg-white pr-[11px] pl-[5px] text-[#999]">
        <span>Sort</span>
        <button aria-label="Close"><Svg w={8} h={8}><path d="M.5.5l7 7M7.5.5l-7 7" stroke="#888" strokeWidth=".9" /></Svg></button>
      </div>
      <div className="flex h-[25px] items-center justify-between px-[4px]">
        <button className="flex h-[16px] w-[66px] items-center gap-[3px] border border-[#b8b8b8] bg-[#e4e4e4] pl-[4px]">
          <Svg w={10} h={10}><path d="M5 0v10M0 5h10" stroke="#2c8a4b" /></Svg>
          <span><u>A</u>dd</span>
        </button>
        <span className="text-[7px]"><u>h</u>eaders</span>
      </div>
      <div className="mx-[4px] flex h-[111px] flex-col border border-[#8c8c8c] bg-white">
        <div className="h-[13px] pl-[3px] text-[7px] leading-[13px]">Column</div>
        <div className="flex h-[15px] items-center justify-between bg-[#e4e4e4] pr-[2px] pl-[2px]">
          <span className="w-[24px] shrink-0 text-[7px] leading-[10px] whitespace-nowrap">Sort by</span>
          <span className="flex h-[13px] w-[100px] items-center justify-end border border-[#b0b0b0] bg-white"><button aria-label="Order options" className="flex h-[11px] w-[12px] items-center justify-center border border-[#999] bg-[#e6e6e6]"><Chevron /></button></span>
        </div>
      </div>
      <div className="flex flex-1 items-start justify-end pt-[2px] pr-[4px]">
        <button className="h-[14px] w-[52px] border border-[#c4c4c4] bg-[#e2e2e2] text-center leading-[12px]">Cancel</button>
      </div>
      <svg className="absolute right-px bottom-px" width="6" height="6" aria-hidden="true">
        <path d="M5 0v1M5 2.500v1M3 2.500v1M5 5v1M3 5v1M1 5v1" stroke="#aaa" />
      </svg>
    </div>
  );
}

const ITEMS = ["NEW LIST", "Mon, Tue, Wed, Thu, Fri, Sat, S", "Monday, Tuesday, Wednesday", "Jan, Feb, Mar, Apr, May, Jun, Ju", "January, February, March, Apri", "South Africa, Sudan, Kenya, Ko"];

function CustomListsDialog() {
  return (
    <div role="dialog" aria-label="Custom Lists" className="absolute top-[147px] left-[315px] flex h-[254px] w-[328px] flex-col border border-[#6e6e6e] bg-[#f0f0f0] font-['Noto_Sans','Open_Sans',sans-serif] text-[7px] leading-[9px] text-[#111] shadow-[0_3px_12px_rgba(0,0,0,0.4)]">
      <div className="flex h-[20px] shrink-0 items-center bg-white pr-[11px] pb-px pl-[5px] font-['Open_Sans','Noto_Sans',sans-serif] text-[8px]">
        <span>Custom Lists</span>
        <button aria-label="Help" className="mr-[24px] ml-auto font-bold">?</button>
        <button aria-label="Close"><Svg w={8} h={8}><path d="M.5.5l7 7M7.5.5l-7 7" stroke="#222" strokeWidth=".9" /></Svg></button>
      </div>
      <div className="flex min-h-0 flex-1 flex-col px-[5px] pt-[4px]">
        <button role="tab" aria-selected="true" className="h-[15px] w-[54px] border border-b-0 border-[#dcdcdc] bg-white">Custom Lists</button>
        <div className="flex h-[186px] border border-t-0 border-[#dcdcdc] bg-white pt-[6px] pl-[4px]">
          <div className="flex w-[120px] shrink-0 flex-col">
            <span id="custom-lists-label" className="h-[10px]">Custom <u>l</u>ists:</span>
            <div className="flex h-[107px] border border-[#828790] bg-white">
              <ul role="listbox" aria-labelledby="custom-lists-label" className="grid h-[53px] min-w-0 flex-1 grid-cols-1 auto-rows-fr pt-px pl-px leading-[8px]">
                {ITEMS.map((t, i) => (
                  <li key={t} role="option" aria-selected={i === 5} className={`overflow-hidden pl-px whitespace-nowrap ${i === 5 ? "bg-[#0078d7] text-white" : ""}`}>{t}</li>
                ))}
              </ul>
              <div className="flex w-[12px] flex-col items-center justify-between bg-[#f0f0f0] py-[4px]">
                <Svg w={6} h={4}><path d="M1 3l2-2 2 2" stroke="#a0a0a0" /></Svg>
                <Chevron color="#a0a0a0" />
              </div>
            </div>
            <p className="mt-[7px] ml-[12px] whitespace-nowrap">Press Enter to separate list entries.</p>
          </div>
          <div className="ml-[5px] flex w-[124px] shrink-0 flex-col">
            <label htmlFor="entries" className="h-[10px]">List <u>e</u>ntries:</label>
            <textarea id="entries" className="h-[108px] w-full resize-none border border-[#828790] bg-white outline-none" />
          </div>
          <div className="ml-[6px] flex flex-col gap-[5px] pt-[9px] text-[8px]">
            <button className="h-[15px] w-[51px] border border-[#b0b0b0] bg-[#e2e2e2]"><u>A</u>dd</button>
            <button className="h-[15px] w-[51px] border border-[#c0c0c0] bg-[#dcdcdc] text-[#888]">Delete</button>
          </div>
        </div>
        <div className="flex flex-1 items-center justify-end gap-[7px] font-['Open_Sans','Noto_Sans',sans-serif] text-[8px]">
          <button className="h-[15px] w-[49px] border-2 border-[#2f74b5] bg-[#e2e2e2] leading-[10px]">OK</button>
          <button className="h-[15px] w-[49px] border border-[#b8b8b8] bg-[#e2e2e2]">Cancel</button>
        </div>
      </div>
    </div>
  );
}

export default function App() {
  return (
    <main className="relative flex h-screen flex-col overflow-hidden bg-[#e6e6e6] font-['Open_Sans','Noto_Sans',sans-serif]">
      <TitleBar />
      <TabRow />
      <Ribbon />
      <FormulaBar />
      <Sheet />
      <SheetTabs />
      <StatusBar />
      <Taskbar />
      <SortDialog />
      <CustomListsDialog />
      <svg className="absolute top-[255px] left-[382px]" width="13" height="18" viewBox="0 0 13 18" aria-hidden="true">
        <path d="M1.5 1v13l3.2-2.8 2.2 5 2.3-1-2.2-4.7h4.2z" fill="#fff" stroke="#222" strokeWidth=".9" />
      </svg>
    </main>
  );
}
